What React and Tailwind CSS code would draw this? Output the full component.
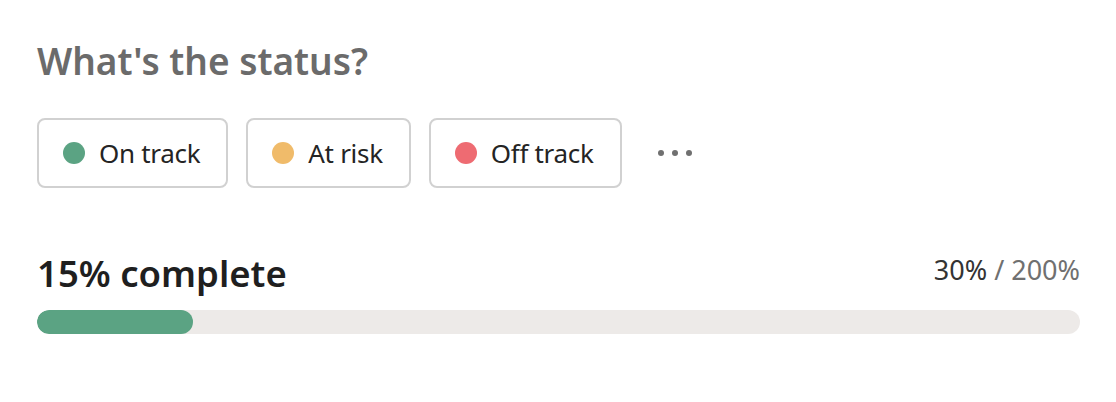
import React from 'react';

const statuses = [
  { label: 'On track', color: 'bg-[#5ba383]' },
  { label: 'At risk', color: 'bg-[#f0bb6a]' },
  { label: 'Off track', color: 'bg-[#ee6b72]' },
];

const App = () => {
  return (
    <div
      className="w-[1116px] h-[402px] bg-white pl-[37px] pr-[36px] pt-[36px]"
      style={{ fontFamily: '"Noto Sans", "Open Sans", sans-serif' }}
    >
      <h2 className="text-[37px] leading-[50px] font-semibold text-[#6b6b6b]">What's the status?</h2>

      <div className="mt-[32px] flex items-center gap-[18px]">
        {statuses.map((s) => (
          <button
            key={s.label}
            className="h-[70px] flex items-center gap-[14px] pl-[24px] pr-[26px] border-2 border-[#d1d1d1] rounded-[8px] bg-white whitespace-nowrap"
          >
            <span className={`w-[22px] h-[22px] rounded-full shrink-0 ${s.color}`} />
            <span className="text-[26px] text-[#242424] tracking-[-0.3px]">{s.label}</span>
          </button>
        ))}
        <div className="ml-[18px] flex gap-[8px] items-center">
          <span className="w-[6px] h-[6px] rounded-full bg-[#707070]" />
          <span className="w-[6px] h-[6px] rounded-full bg-[#707070]" />
          <span className="w-[6px] h-[6px] rounded-full bg-[#707070]" />
        </div>
      </div>

      <div className="mt-[60px] flex items-end justify-between">
        <span className="text-[36.5px] leading-[50px] font-semibold text-[#1f1f1f]">15% complete</span>
        <span className="text-[27px] leading-[36px] mb-[10px] font-normal text-[#333333]">
          30% <span className="text-[#707070]">/ 200%</span>
        </span>
      </div>

      <div className="mt-[12px] h-[24px] w-full rounded-full bg-[#edeae8] overflow-hidden">
        <div className="h-full rounded-full bg-[#5ba383]" style={{ width: '15%' }} />
      </div>
    </div>
  );
};

export default App;
